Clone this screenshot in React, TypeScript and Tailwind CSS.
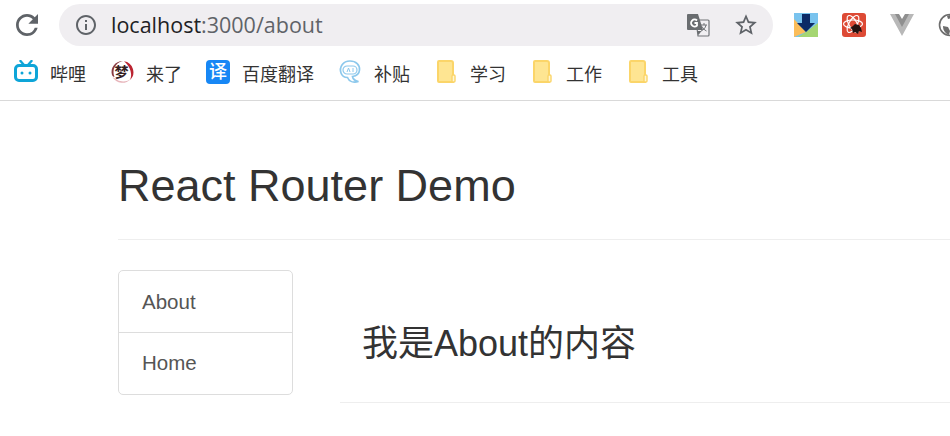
import React from "react";

const font = { sans: "font-['Liberation_Sans','Noto_Sans_CJK_SC',sans-serif]" };

function ReloadIcon() {
  return (
    <svg width="22" height="22" viewBox="4 4 16 16" className="shrink-0">
      <path
        d="M17.65 6.35A7.958 7.958 0 0 0 12 4c-4.42 0-7.99 3.58-7.99 8s3.57 8 7.99 8c3.73 0 6.84-2.55 7.73-6h-2.08A5.99 5.99 0 0 1 12 18c-3.31 0-6-2.69-6-6s2.69-6 6-6c1.66 0 3.14.69 4.22 1.78L13 11h7V4l-2.35 2.35z"
        fill="#5f6368"
      />
    </svg>
  );
}

function InfoIcon() {
  return (
    <svg width="24" height="24" viewBox="0 0 24 24" className="shrink-0">
      <path
        d="M11 7h2v2h-2zm0 4h2v6h-2zm1-9C6.48 2 2 6.48 2 12s4.48 10 10 10 10-4.48 10-10S17.52 2 12 2zm0 18c-4.41 0-8-3.59-8-8s3.59-8 8-8 8 3.59 8 8-3.59 8-8 8z"
        fill="#5f6368"
      />
    </svg>
  );
}

function StarIcon() {
  return (
    <svg width="26" height="26" viewBox="0 0 24 24" className="ml-[23px] shrink-0">
      <path
        d="M22 9.24l-7.19-.62L12 2 9.19 8.63 2 9.24l5.46 4.73L5.82 21 12 17.27 18.18 21l-1.63-7.03L22 9.24zM12 15.4l-3.76 2.27 1-4.28-3.32-2.88 4.38-.38L12 6.1l1.71 4.04 4.38.38-3.32 2.88 1 4.28L12 15.4z"
        fill="#5f6368"
      />
    </svg>
  );
}

function BiliIcon() {
  return (
    <svg width="24" height="24" viewBox="0 0 24 24">
      <path d="M6.500 1 10 5M17.500 1 14 5" stroke="#0ea5d8" strokeWidth="2.400" strokeLinecap="round" />
      <rect x="1.500" y="5.500" width="21" height="15" rx="3.500" fill="none" stroke="#0ea5d8" strokeWidth="3" />
      <circle cx="8" cy="13" r="1.500" fill="#0ea5d8" />
      <circle cx="16" cy="13" r="1.500" fill="#0ea5d8" />
    </svg>
  );
}

function DreamIcon() {
  return (
    <svg width="24" height="24" viewBox="0 0 24 24">
      <circle cx="12" cy="12" r="11" fill="#fff" />
      <path d="M2.500 17A11 11 0 0 0 21 18.500c-3 3-9 4-13.500 1.500Z" fill="#e7b4ba" />
      <path d="M14 1.200A11 11 0 0 1 20 20c2-4 2-12-6-18.800Z" fill="#bb2431" />
      <path d="M2 15C0 8 5 1 13 1 8 2 3.500 6 3.500 12c0 2 .5 3.500 1 5-1 0-2-1-2.500-2Z" fill="#8a3a40" />
      <text x="11.500" y="17" fontSize="14" fontWeight="700" textAnchor="middle" fill="#35201f">梦</text>
    </svg>
  );
}

function TranslateIcon() {
  return (
    <div className="flex h-6 w-6 items-center justify-center rounded-[4px] bg-[#1787f5] text-[18px] font-medium leading-none text-white">
      译
    </div>
  );
}

function AiIcon() {
  return (
    <svg width="24" height="24" viewBox="0 0 24 24">
      <path d="M3 13C1 7 5 1 12 1c6 0 10 4 9.500 9-.3 4-3.500 6-7 6.500.5 3 3 4.500 6 5-5 1.500-9.500 0-11-4-3 0-5.500-1.500-6.500-4.500Z" fill="none" stroke="#8cc8ec" strokeWidth="1.700" />
      <rect x="5" y="6" width="14" height="8" rx="4" fill="none" stroke="#8cc8ec" strokeWidth="1.200" />
      <path d="M9 12l1.500-4 1.500 4M15 8v4" stroke="#8cc8ec" strokeWidth="1" fill="none" />
    </svg>
  );
}

function FolderIcon() {
  return (
    <svg width="24" height="24" viewBox="0 0 24 24">
      <path d="M4 2A1 1 0 0 1 5 1h12a2 2 0 0 1 2 2v19H5a1 1 0 0 1-1-1Z" fill="#fee592" stroke="#fbd569" strokeWidth="2" />
      <rect x="18" y="15" width="3" height="7" rx="1" fill="#fff6d2" stroke="#fbd569" strokeWidth="1.400" />
    </svg>
  );
}

function GoogleTranslateIcon() {
  return (
    <svg width="24" height="24" viewBox="0 0 24 24" className="shrink-0">
      <path d="M10 7h12a1 1 0 0 1 1 1v14a1 1 0 0 1-1 1H12Z" fill="#f1eff2" stroke="#707377" strokeWidth="1.200" />
      <path d="M2 1h10l5 16H2a1 1 0 0 1-1-1V2a1 1 0 0 1 1-1Z" fill="#6a6d70" />
      <path d="M11 18l1.500 4 3-4Z" fill="#6a6d70" />
      <path d="M11 7.500A3.500 3.500 0 1 0 11 12.500V10H8.500" fill="none" stroke="#fff" strokeWidth="1.800" />
      <path d="M15 12h6M18 10v2M20 12c-.5 3-2.500 5-5 6M16 13.500c1 2 2.500 3.500 4.500 4.500" fill="none" stroke="#707377" strokeWidth="1" />
    </svg>
  );
}

function DownloadExt() {
  return (
    <svg width="24" height="24" viewBox="0 0 24 24" className="shrink-0">
      <rect width="24" height="24" fill="#79c3ee" />
      <path d="M0 6 12 19 0 24Z" fill="#fbbd5a" />
      <path d="M24 10V24H4L12 19Z" fill="#a5d672" />
      <path d="M8 1h8v9h5L12 19 3 10h5Z" fill="#0c2a66" />
    </svg>
  );
}

function ReactExt() {
  return (
    <svg width="24" height="24" viewBox="0 0 24 24" className="shrink-0">
      <rect width="24" height="24" rx="3" fill="#dd4a35" />
      <g fill="none" stroke="#fff" strokeWidth="1.200">
        <ellipse cx="11" cy="11" rx="9.500" ry="4" />
        <ellipse cx="11" cy="11" rx="9.500" ry="4" transform="rotate(60 11 11)" />
        <ellipse cx="11" cy="11" rx="9.500" ry="4" transform="rotate(120 11 11)" />
      </g>
      <path d="M13 11l4 1 2 3 1 4-3-1-1 3-3-2-2 1-1-4-2-1 3-2Z" fill="#251210" />
    </svg>
  );
}

function VueExt() {
  return (
    <svg width="24" height="24" viewBox="0 0 24 24" className="shrink-0">
      <path d="M0 1h7l5 8 5-8h7L12 23Z" fill="#b8b8b8" />
      <path d="M5 1h4l3 5 3-5h4L12 14Z" fill="#8f8f8f" />
    </svg>
  );
}

function GlobeExt() {
  return (
    <svg width="24" height="24" viewBox="0 0 24 24" className="shrink-0">
      <circle cx="12" cy="12" r="10.500" fill="#fff" stroke="#6d6d6d" strokeWidth="1.600" />
      <path d="M12 2c5 0 10 4 10 10l-5 3-3-1-1-4 3-3-2-2-4 1-1-3Z" fill="#6d6d6d" />
      <path d="M5 13l5 1 2 4-1 4c-3-1-6-4-6-9Z" fill="#6d6d6d" />
    </svg>
  );
}

const bookmarks = [
  { icon: <BiliIcon />, label: "哔哩" },
  { icon: <DreamIcon />, label: "来了" },
  { icon: <TranslateIcon />, label: "百度翻译" },
  { icon: <AiIcon />, label: "补贴" },
  { icon: <FolderIcon />, label: "学习" },
  { icon: <FolderIcon />, label: "工作" },
  { icon: <FolderIcon />, label: "工具" },
];

export default function App() {
  return (
    <div className={`h-[436px] w-[950px] overflow-hidden bg-white ${font.sans}`}>
      <header className="h-[101px] border-b border-[#d9d9d9]">
        <div className="flex h-[50px] items-center pb-[1px] pl-[16px]">
          <ReloadIcon />
          <div className="ml-[21px] flex h-[42px] w-[714px] shrink-0 items-center rounded-full bg-[#f0eef1] pl-[15px] pr-[14px]">
            <InfoIcon />
            <div className="ml-[13px] flex-1 font-['Open_Sans',sans-serif] text-[21.500px] leading-none text-[#202124]">
              localhost<span className="text-[#5f6368]">:3000/about</span>
            </div>
            <GoogleTranslateIcon />
            <StarIcon />
          </div>
          <div className="ml-[21px] flex shrink-0 items-center gap-[24px]">
            <DownloadExt />
            <ReactExt />
            <VueExt />
            <GlobeExt />
          </div>
        </div>
        <nav className="flex h-[50px] items-center gap-[24px] pl-[14px]">
          {bookmarks.map((b) => (
            <div key={b.label} className="flex items-center gap-[12px]">
              <div className="mb-[6px] shrink-0">{b.icon}</div>
              <span className="text-[18px] leading-none text-[#333]">{b.label}</span>
            </div>
          ))}
        </nav>
      </header>
      <main className="pl-[118px]">
        <div className="flex h-[139px] items-end border-b border-[#eee] pb-[29px]">
          <h1 className="text-[45px] leading-[1.1] text-[#333]">React Router Demo</h1>
        </div>
        <div className="mt-[30px] flex">
          <ul className="h-[125px] w-[175px] shrink-0 rounded-[5px] border border-[#ddd] text-[20.500px] text-[#555]">
            <li className="flex h-[62px] items-center border-b border-[#ddd] pl-[23px] pt-[1px]">About</li>
            <li className="flex h-[61px] items-center pl-[23px]">Home</li>
          </ul>
          <div className="ml-[47px] flex-1 pt-[54px]">
            <div className="h-[79px] border-b border-[#eee] pl-[22px]">
              <h2 className="text-[36px] leading-[1.1] text-[#333]">我是About的内容</h2>
            </div>
          </div>
        </div>
      </main>
    </div>
  );
}
